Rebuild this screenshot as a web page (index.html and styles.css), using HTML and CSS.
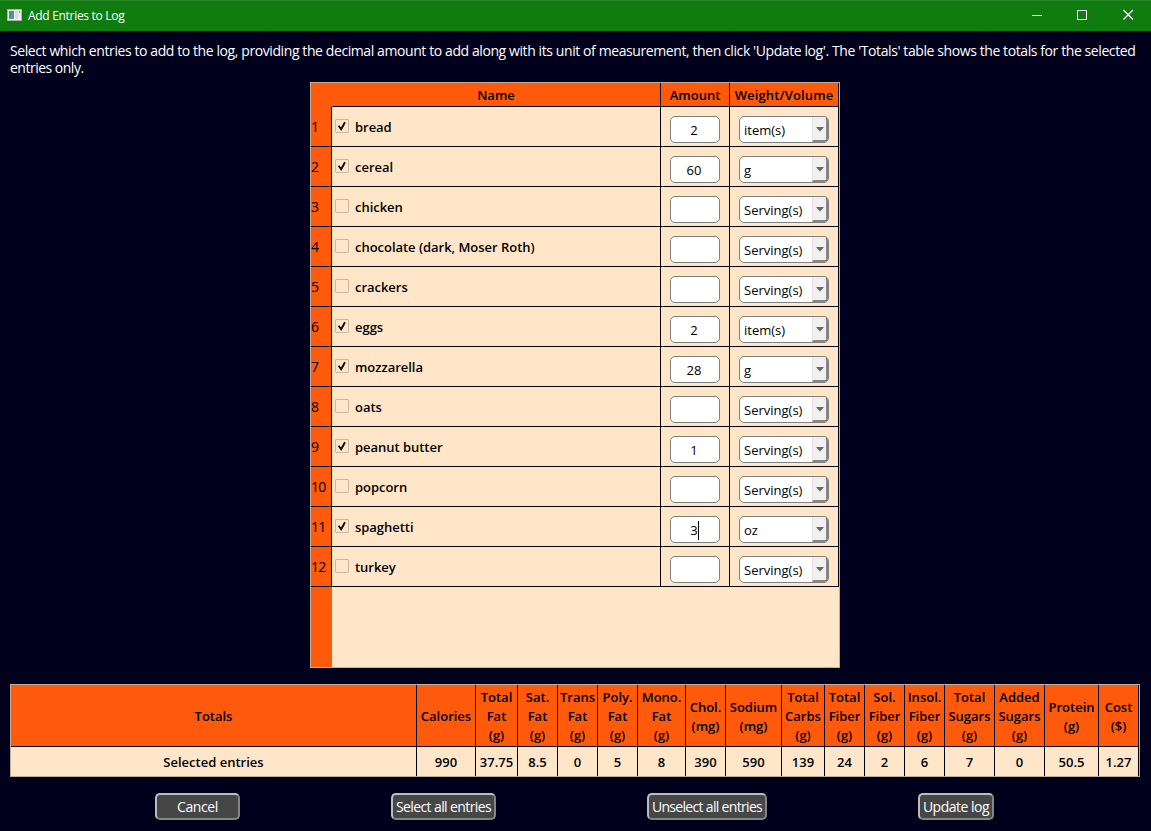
FILE: index.html
```
<!DOCTYPE html>
<html lang="en">
<head>
<meta charset="utf-8">
<title>Add Entries to Log</title>
<link rel="stylesheet" href="styles.css">
</head>
<body>
<header class="titlebar">
  <svg class="app-icon" width="15" height="12" viewBox="0 0 15 12"><defs><linearGradient id="pane" x1="0" y1="0" x2="1" y2="1"><stop offset="0" stop-color="#4f7fae"/><stop offset="1" stop-color="#55a673"/></linearGradient></defs><rect x=".5" y=".5" width="14" height="11" fill="#f4f4f4" stroke="#b4b0b4"/><rect x="2" y="2" width="5" height="8" fill="url(#pane)"/><rect x="8" y="2" width="3" height="8" fill="#d9dce0"/><rect x="11" y="2" width="3" height="8" fill="#eee"/><rect x="12" y="2" width="1" height="2" fill="#6d9fc9"/></svg>
  <span class="title">Add Entries to Log</span>
  <svg class="window-controls" width="102" height="12" viewBox="0 0 102 12" fill="none" stroke="#fff"><path d="M0 6.500h10M45.500 1.500h9v9h-9z"/><path d="M91.500 1l9.500 9.500M101 1l-9.500 9.500" stroke-width="1.150"/></svg>
</header>
<p class="intro"><span class="line1">Select which entries to add to the log, providing the decimal amount to add along with its unit of measurement, then click 'Update log'. The 'Totals' table shows the totals for the selected</span><br><span class="line2">entries only.</span></p>
<main class="entries" id="entries">
  <div class="head"><span class="corner"></span><span class="h-name">Name</span><span class="h-amount">Amount</span><span class="h-unit">Weight/Volume</span></div>
</main>
<section class="totals" id="totals"></section>
<footer class="actions">
  <button class="btn cancel">Cancel</button>
  <button class="btn select">Select all entries</button>
  <button class="btn unselect">Unselect all entries</button>
  <button class="btn update">Update log</button>
</footer>
<script src="app.js"></script>
</body>
</html>
```

FILE: styles.css
```
* { box-sizing: border-box; }
body { margin: 0; width: 1151px; height: 831px; overflow: hidden; background: #00001c; color: #fff; font-family: "Open Sans", "Noto Sans", sans-serif; font-size: 14px; display: flex; flex-direction: column; }
.titlebar { height: 31px; flex: none; background: #107c10; border-top: 1px solid #2a8a2a; display: flex; align-items: flex-start; padding: 0 17px 0 7px; font-size: 12px; line-height: 29px; }
.app-icon { margin-top: 8px; }
.title { margin-left: 6px; letter-spacing: -0.3px; white-space: nowrap; }
.window-controls { margin: 8px 0 0 auto; }
.intro { margin: 11px 0 0 10px; height: 40px; line-height: 17px; white-space: nowrap; }
.line1 { letter-spacing: -0.408px; }
.line2 { letter-spacing: -0.5px; }
.entries { width: 530px; height: 586px; flex: none; margin-left: 310px; border: 1px solid #c0af9b; color: #000; font-weight: 600; font-size: 13px; background: linear-gradient(90deg, #ff5a0c 21px, #ffe6c9 21px); }
.head, .row { display: grid; grid-template-columns: 21px 329px 69px 109px; }
.head { height: 24px; background: #ff5a0c; line-height: 22px; text-align: center; }
.head > span { padding-top: 1px; border-right: 1px solid #000; border-bottom: 1px solid #000; white-space: nowrap; }
.head > .corner { border-color: transparent; }
.head > .h-unit { letter-spacing: 0.14px; }
.row { height: 40px; }
.row > div { border-right: 1px solid #000; border-bottom: 1px solid #000; display: flex; align-items: center; white-space: nowrap; }
.row .num { font-size: 14px; font-weight: 500; letter-spacing: -0.8px; }
.name { padding-left: 3px; letter-spacing: -0.03px; }
.check { width: 14px; height: 14px; flex: none; margin: 0 6px 1px 0; border: 1px solid #c9b7a1; border-radius: 1px; }
.check svg { display: block; }
.row .amount, .row .unit { padding: 9px 9px 3px; font-weight: 400; align-items: flex-start; }
.field, .combo { height: 27px; background: #fff; border: 1px solid #808080; border-radius: 5px; line-height: 27px; }
.field { width: 50px; text-align: center; padding-right: 2px; }
.caret { display: inline-block; width: 1px; height: 19px; background: #000; vertical-align: middle; margin-right: -1px; margin-top: -3px; }
.combo { width: 90px; padding-left: 4px; display: flex; justify-content: space-between; overflow: hidden; }
.drop { width: 16px; height: 25px; padding-top: 2px; background: #f0f0f0; border-left: 1px solid #e3e3e3; border-right: 2px solid #858585; border-bottom: 2px solid #858585; border-radius: 0 3px 3px 0; display: flex; align-items: center; justify-content: center; }
.drop svg { flex: none; }
.totals { width: 1130px; height: 93px; flex: none; margin: 16px 0 0 10px; border: 1px solid #c0af9b; display: grid; grid-template-columns: 406px 59px 42px 40px 40px 40px 48px 40px 56px 43px 40px 40px 40px 50px 50px 54px 40px; grid-template-rows: 62px 29px; background: #ffe6c9; color: #000; font-weight: 600; font-size: 13px; line-height: 19px; text-align: center; }
.totals > div { display: flex; align-items: center; justify-content: center; border-right: 1px solid #000; white-space: nowrap; }
.totals .label { background: #ff5a0c; border-bottom: 1px solid #000; padding-top: 2px; }
.totals .value { padding-top: 1px; }
.actions { display: flex; gap: 151px; padding: 16px 0 0 155px; }
.btn { height: 27px; padding: 0; border: 2px solid; border-color: #bdbdbd #858585 #858585 #bdbdbd; border-radius: 5px; background: #464646; color: #fff; font: 14px/22px "Open Sans", "Noto Sans", sans-serif; white-space: nowrap; letter-spacing: -0.4px; }
.cancel { width: 85px; }
.select { width: 105px; letter-spacing: -0.6px; }
.unselect { width: 120px; letter-spacing: -0.68px; }
.update { width: 76px; letter-spacing: -0.5px; }
```

FILE: app.js
```
const entries = [
  ["bread", "2", "item(s)"], ["cereal", "60", "g"], ["chicken", "", "Serving(s)"],
  ["chocolate (dark, Moser Roth)", "", "Serving(s)"], ["crackers", "", "Serving(s)"],
  ["eggs", "2", "item(s)"], ["mozzarella", "28", "g"], ["oats", "", "Serving(s)"],
  ["peanut butter", "1", "Serving(s)"], ["popcorn", "", "Serving(s)"],
  ["spaghetti", "3", "oz"], ["turkey", "", "Serving(s)"]
];
const tick = '<svg width="12" height="12" viewBox="0 0 12 12"><path d="M2.700 5.700 5.200 9.200 9 2.200" fill="none" stroke="#000" stroke-width="1.800"/></svg>';
const arrow = '<svg width="8" height="5" viewBox="0 0 8 5"><path d="M0 0h8L4 4.500z" fill="#666"/></svg>';
document.getElementById("entries").insertAdjacentHTML("beforeend", entries.map(([name, amount, unit], i) =>
  `<div class="row"><div class="num"><span>${i + 1}</span></div>
  <div class="name"><span class="check">${amount ? tick : ""}</span><span>${name}</span></div>
  <div class="amount"><div class="field"><span>${amount}</span>${name === "spaghetti" ? '<i class="caret"></i>' : ""}</div></div>
  <div class="unit"><div class="combo"><span>${unit}</span><span class="drop">${arrow}</span></div></div></div>`).join(""));

const totals = [
  ["Totals", "Selected entries"], ["Calories", "990"], ["Total<br>Fat<br>(g)", "37.75"],
  ["Sat.<br>Fat<br>(g)", "8.5"], ["Trans<br>Fat<br>(g)", "0"], ["Poly.<br>Fat<br>(g)", "5"],
  ["Mono.<br>Fat<br>(g)", "8"], ["Chol.<br>(mg)", "390"], ["Sodium<br>(mg)", "590"],
  ["Total<br>Carbs<br>(g)", "139"], ["Total<br>Fiber<br>(g)", "24"], ["Sol.<br>Fiber<br>(g)", "2"],
  ["Insol.<br>Fiber<br>(g)", "6"], ["Total<br>Sugars<br>(g)", "7"], ["Added<br>Sugars<br>(g)", "0"],
  ["Protein<br>(g)", "50.5"], ["Cost<br>($)", "1.27"]
];
document.getElementById("totals").innerHTML =
  totals.map(t => `<div class="label"><span>${t[0]}</span></div>`).join("") +
  totals.map(t => `<div class="value"><span>${t[1]}</span></div>`).join("");
```
